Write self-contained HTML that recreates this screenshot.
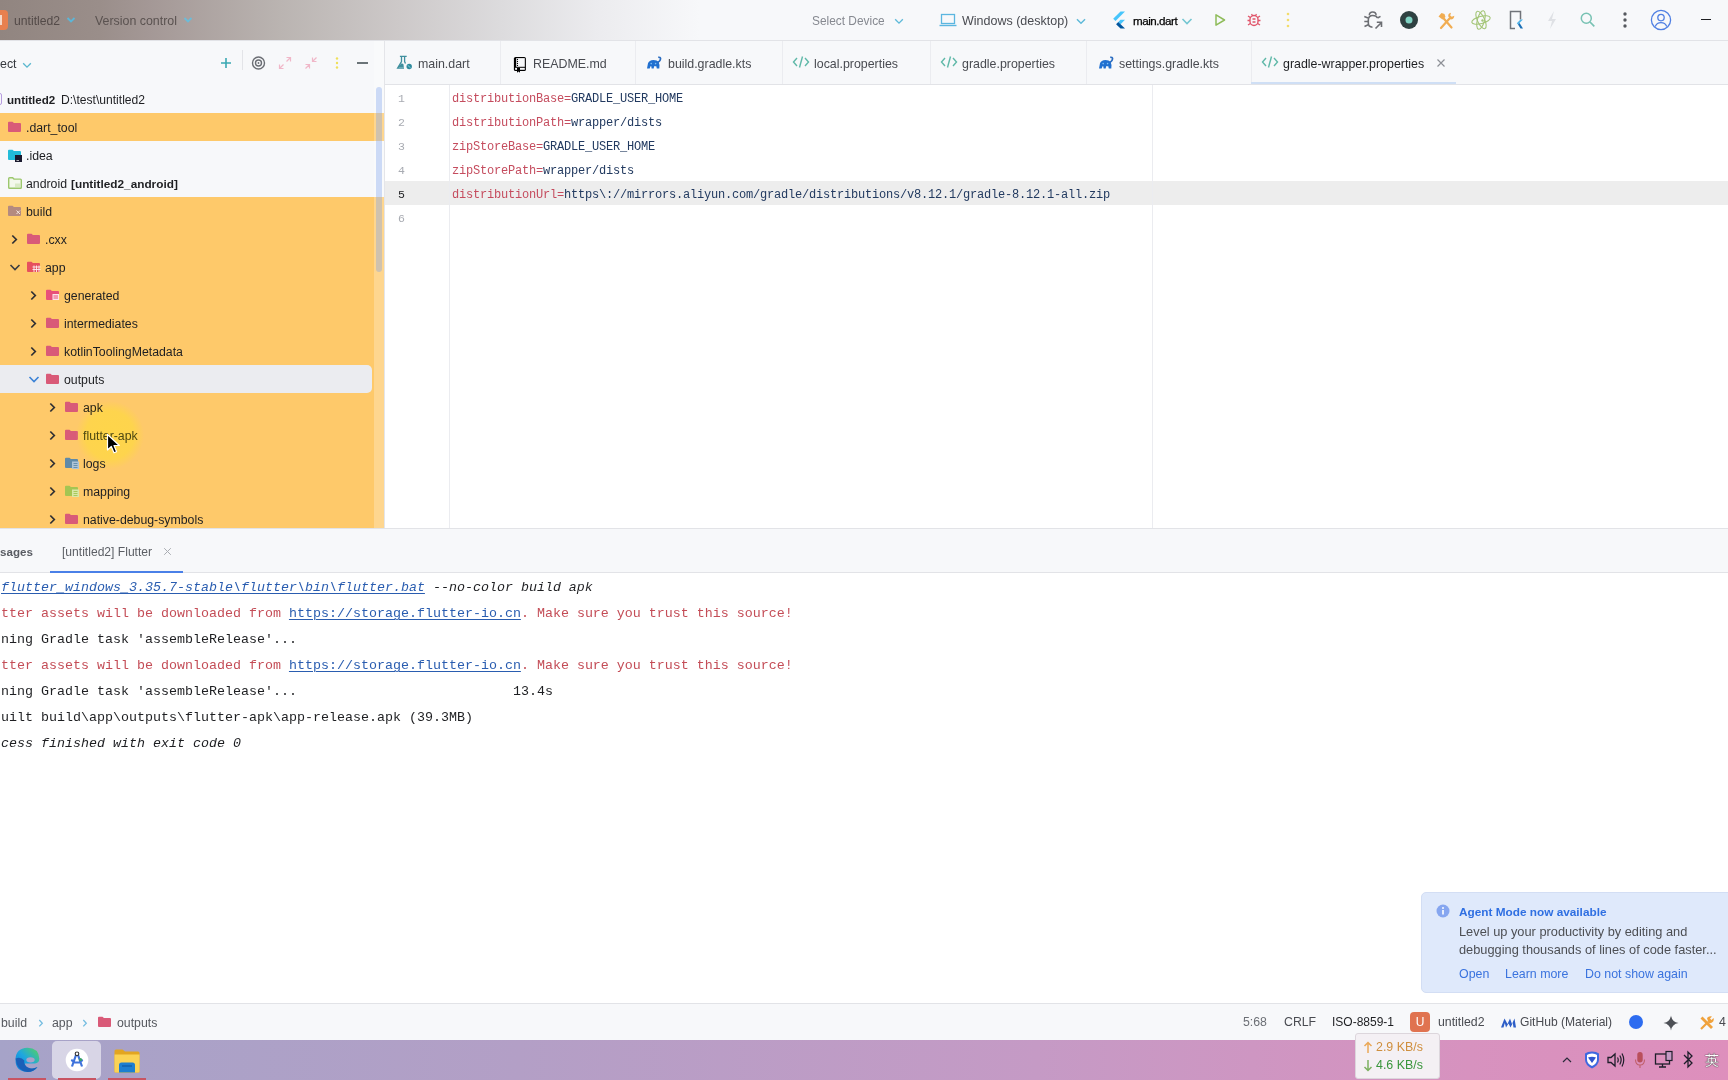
<!DOCTYPE html><html><head><meta charset="utf-8"><style>
*{margin:0;padding:0;box-sizing:border-box}
html,body{width:1728px;height:1080px;overflow:hidden;background:#f7f8fa;font-family:"Liberation Sans",sans-serif;font-size:12.4px;color:#1e1f22}
.a{position:absolute}
.t{-webkit-font-smoothing:antialiased}
#root{position:absolute;left:0;top:0;width:1728px;height:1080px;will-change:transform}
svg{display:block}
#title{left:0;top:0;width:1728px;height:41px;background:linear-gradient(90deg,#918580 0px,#9a8e8a 100px,#a49896 150px,#bab4b1 280px,#cdc9c9 400px,#dcdbdd 500px,#ececef 600px,#f7f8fa 700px,#f7f8fa 1728px);border-bottom:1px solid #e2e3e7}
.t{position:absolute;white-space:nowrap;line-height:16px;z-index:2}
#proj{left:0;top:41px;width:384px;height:487px;background:#f7f8fa;overflow:hidden}
#tabs{left:385px;top:41px;width:1343px;height:44px;background:#f7f8fa;border-bottom:1px solid #e2e3e7}
#editor{left:385px;top:85px;width:1343px;height:443px;background:#fff;overflow:hidden}
.row{position:absolute;left:0;height:28px;width:384px}
.orange{background:#fec96a}
.code{position:absolute;left:67px;font-family:"Liberation Mono",monospace;font-size:12px;letter-spacing:-0.2px;line-height:24px;white-space:pre;color:#223a60}
.k{color:#c54c5e}
.ln{position:absolute;left:0;width:20px;text-align:right;font-family:"Liberation Mono",monospace;font-size:11.5px;color:#aeb1b8;line-height:24px}
#bottom{left:0;top:528px;width:1728px;height:476px;background:#fff}
#btabs{left:0;top:528px;width:1728px;height:45px;background:#f7f8fa;border-top:1px solid #e2e3e7;border-bottom:1px solid #e2e3e7}
.con{position:absolute;left:1px;font-family:"Liberation Mono",monospace;font-size:13.33px;line-height:26px;white-space:pre;color:#1e1f22}
.red{color:#c44d57}
.lnk{color:#2a5db0;text-decoration:underline;text-underline-offset:2px;text-decoration-thickness:1px}
.it{font-style:italic}
#status{left:0;top:1003px;width:1728px;height:37px;background:#f7f8fa;border-top:1px solid #e2e3e7}
#task{left:0;top:1040px;width:1728px;height:40px;background:linear-gradient(90deg,#a6a3c8 0%,#b39fc6 30%,#c59ac5 60%,#d792bf 85%,#de8fbc 100%)}
.tabtxt{color:#494b51}
</style></head><body><div id="root">
<div id="title" class="a">
<div class="a" style="left:-12px;top:10px;width:20px;height:20px;border-radius:4px;background:#e8804f"></div>
<div class="a" style="left:0;top:15px;width:2px;height:10px;background:#f6d8c8"></div>
<div class="t" style="left:14px;top:13px;font-size:12.2px;color:#534a48">untitled2</div>
<svg class="a" style="left:66px;top:16px" width="10" height="8" viewBox="0 0 10 8"><path d="M1.5 2L5 5.5L8.5 2" fill="none" stroke="#5cb6d8" stroke-width="1.8"/></svg>
<div class="t" style="left:95px;top:13px;font-size:12.4px;color:#5a5250">Version control</div>
<svg class="a" style="left:183px;top:16px" width="10" height="8" viewBox="0 0 10 8"><path d="M1.5 2L5 5.5L8.5 2" fill="none" stroke="#6cbcd9" stroke-width="1.8"/></svg>
<div class="t" style="left:812px;top:13px;font-size:11.9px;color:#868990">Select Device</div>
<div class="a" style="left:891px;top:13px;transform:scale(0.85)"><svg width="16" height="16" viewBox="0 0 16 16"><path d="M3.5 6L8 10.5L12.5 6" fill="none" stroke="#5fbad9" stroke-width="1.6"/></svg></div>
<svg class="a" style="left:939px;top:12px" width="18" height="16" viewBox="0 0 18 16"><rect x="2.5" y="2.5" width="13" height="9" fill="none" stroke="#5bb6e0" stroke-width="1.3"/><path d="M0.5 13.5H17.5" stroke="#5bb6e0" stroke-width="1.4"/></svg>
<div class="t" style="left:962px;top:13px;font-size:12.5px;color:#494b51">Windows (desktop)</div>
<div class="a" style="left:1073px;top:13px;transform:scale(0.9)"><svg width="16" height="16" viewBox="0 0 16 16"><path d="M3.5 6L8 10.5L12.5 6" fill="none" stroke="#5fbad9" stroke-width="1.6"/></svg></div>
<svg class="a" style="left:1111px;top:11px" width="16" height="18" viewBox="0 0 16 18"><path d="M9.5 0.5H14L4.5 10L2.2 7.7Z" fill="#47c5fb"/><path d="M9.5 8.8H14L9.6 13.2L7.3 11Z" fill="#47c5fb"/><path d="M7.3 11L9.6 13.2L14 17.5H9.5L5.1 13.2Z" fill="#00569e"/></svg>
<div class="t" style="left:1133px;top:13px;font-size:11.6px;letter-spacing:-0.45px;color:#000;-webkit-text-stroke:0.25px #000">main.dart</div>
<div class="a" style="left:1179px;top:13px"><svg width="16" height="16" viewBox="0 0 16 16"><path d="M3.5 6L8 10.5L12.5 6" fill="none" stroke="#74c6d2" stroke-width="1.6"/></svg></div>
<svg class="a" style="left:1212px;top:12px" width="16" height="16" viewBox="0 0 16 16"><path d="M4 2.8L12.5 8L4 13.2Z" fill="none" stroke="#8fbc5a" stroke-width="1.5" stroke-linejoin="round"/></svg>
<svg class="a" style="left:1245px;top:11px" width="18" height="18" viewBox="0 0 18 18"><rect x="5" y="4.5" width="8" height="10" rx="4" fill="none" stroke="#e0566b" stroke-width="1.4"/><path d="M7.5 8H10.5M7.5 11H10.5M2.5 9.5H5M13 9.5H15.5M3 5L5.3 6.5M15 5L12.7 6.5M3 14L5.3 12.5M15 14L12.7 12.5M6.5 3L7.5 4.5M11.5 3L10.5 4.5" stroke="#e0566b" stroke-width="1.3"/></svg>
<svg class="a" style="left:1283px;top:11px" width="10" height="18" viewBox="0 0 10 18"><circle cx="5" cy="3" r="1.3" fill="#f3dc6b"/><circle cx="5" cy="9" r="1.3" fill="#f3dc6b"/><circle cx="5" cy="15" r="1.3" fill="#f3dc6b"/></svg>
<svg class="a" style="left:1360px;top:6px" width="28" height="28" viewBox="0 0 28 28"><path d="M9.3 9.3Q9.3 5.9 12.7 5.9Q16.1 5.9 16.1 9.3" fill="none" stroke="#6c6e73" stroke-width="1.5"/><path d="M17.5 12Q16.5 9.5 12.7 9.5Q8.5 9.5 8.3 14V17Q8.3 21 12.5 21.2" fill="none" stroke="#6c6e73" stroke-width="1.6"/><path d="M4.3 10.5L8 12M4.3 15.5H8.3M4.5 20.5L8.2 18.8M17.5 12L20.5 10.3" stroke="#6c6e73" stroke-width="1.5"/><path d="M15.5 22.5L21.2 16.8M16.8 16.3H21.5V21" fill="none" stroke="#6c6e73" stroke-width="1.6"/></svg>
<svg class="a" style="left:1399px;top:10px" width="20" height="20" viewBox="0 0 20 20"><circle cx="10" cy="10" r="9" fill="#2f4141"/><circle cx="10" cy="10" r="3.5" fill="#7fd3c3"/></svg>
<svg class="a" style="left:1433px;top:7px" width="26" height="26" viewBox="0 0 26 26"><path d="M8 21L16.5 11.5" stroke="#f1ad52" stroke-width="2.2" stroke-linecap="round"/><path d="M9 9.5L18.5 20.5" stroke="#f1ad52" stroke-width="2.2" stroke-linecap="round"/><path d="M5.5 9.5L8.5 6L11.5 7L12.5 10L9.5 12.5Z" fill="#f1ad52"/><path d="M15.3 9.5Q14.8 6.3 18 5.7L17.2 8.4L18.8 9.8L21.3 8.8Q21.2 12.3 17.6 12.6Z" fill="#f1ad52"/></svg>
<svg class="a" style="left:1470px;top:9px" width="22" height="22" viewBox="0 0 22 22"><ellipse cx="11" cy="11" rx="9.5" ry="3.6" fill="none" stroke="#a3c576" stroke-width="1.1" transform="rotate(-15 11 11)"/><ellipse cx="11" cy="11" rx="9.5" ry="3.6" fill="none" stroke="#a3c576" stroke-width="1.1" transform="rotate(65 11 11)"/><ellipse cx="11" cy="11" rx="9.5" ry="3.6" fill="none" stroke="#a3c576" stroke-width="1.1" transform="rotate(-75 11 11)"/><circle cx="12.5" cy="11.5" r="1.2" fill="#a3c576"/></svg>
<svg class="a" style="left:1506px;top:9px" width="20" height="22" viewBox="0 0 20 22"><path d="M14.5 10.5V2.5H4.5V19.5H9" fill="none" stroke="#707379" stroke-width="1.5"/><path d="M14.5 10.5H17L12 15.5L10.8 14.3Z" fill="#4fb3e8"/><path d="M12 15.5L13.6 13.9L17 19.5H14.5Z" fill="#1a6fb5"/></svg>
<svg class="a" style="left:1543px;top:10px" width="18" height="20" viewBox="0 0 18 20"><path d="M11 1L5 11H9L7 19L13 9H9Z" fill="#dfe1e5"/></svg>
<svg class="a" style="left:1578px;top:10px" width="20" height="20" viewBox="0 0 20 20"><circle cx="8.3" cy="8.3" r="5" fill="none" stroke="#78c2b3" stroke-width="1.5"/><path d="M12 12L16.3 16.3" stroke="#78c2b3" stroke-width="1.7"/></svg>
<svg class="a" style="left:1620px;top:10px" width="10" height="20" viewBox="0 0 10 20"><circle cx="5" cy="4" r="1.7" fill="#55585e"/><circle cx="5" cy="10" r="1.7" fill="#55585e"/><circle cx="5" cy="16" r="1.7" fill="#55585e"/></svg>
<svg class="a" style="left:1650px;top:9px" width="22" height="22" viewBox="0 0 22 22"><circle cx="11" cy="11" r="9.6" fill="none" stroke="#4f7fe3" stroke-width="1.3"/><circle cx="11" cy="8.6" r="3.2" fill="none" stroke="#4f7fe3" stroke-width="1.3"/><path d="M5.2 17.5Q6.8 13.6 11 13.6Q15.2 13.6 16.8 17.5" fill="none" stroke="#4f7fe3" stroke-width="1.3"/></svg>
<div class="a" style="left:1701px;top:19px;width:10px;height:1.3px;background:#1e1f22"></div>
</div>
<div id="proj" class="a">
<div class="t" style="left:0;top:15px;font-size:12.4px;color:#35383e">ect</div>
<div class="a" style="left:19px;top:16px;transform:scale(0.85)"><svg width="16" height="16" viewBox="0 0 16 16"><path d="M3.5 6L8 10.5L12.5 6" fill="none" stroke="#5bb8cf" stroke-width="1.6"/></svg></div>
<svg class="a" style="left:218px;top:14px" width="16" height="16" viewBox="0 0 16 16"><path d="M8 3V13M3 8H13" stroke="#3aa8b3" stroke-width="1.6"/></svg>
<div class="a" style="left:242px;top:9px;width:1px;height:20px;background:#e3e4e8"></div>
<svg class="a" style="left:250px;top:14px" width="16" height="16" viewBox="0 0 16 16"><circle cx="8.5" cy="8" r="6" fill="none" stroke="#6b6e74" stroke-width="1.4"/><circle cx="8.5" cy="8" r="3" fill="none" stroke="#6b6e74" stroke-width="1.4"/><circle cx="8.5" cy="8" r="0.9" fill="#6b6e74"/></svg>
<svg class="a" style="left:277px;top:14px" width="16" height="16" viewBox="0 0 16 16"><path d="M9.5 2.5H13.5V6.5M13.5 2.5L9.5 6.5M6.5 13.5H2.5V9.5M2.5 13.5L6.5 9.5" fill="none" stroke="#f0b7c8" stroke-width="1.2"/></svg>
<svg class="a" style="left:303px;top:14px" width="16" height="16" viewBox="0 0 16 16"><path d="M9.5 2.5V6.5H13.5M9.5 6.5L13.5 2.5M2.5 9.5H6.5V13.5M6.5 9.5L2.5 13.5" fill="none" stroke="#f0b7c8" stroke-width="1.2"/></svg>
<svg class="a" style="left:332px;top:14px" width="10" height="16" viewBox="0 0 10 16"><circle cx="5" cy="3.5" r="1.2" fill="#efe05a"/><circle cx="5" cy="8" r="1.2" fill="#efe05a"/><circle cx="5" cy="12.5" r="1.2" fill="#efe05a"/></svg>
<div class="a" style="left:357px;top:21px;width:11px;height:2px;background:#6b7478"></div>
<div class="row" style="top:44px;">
<div class="a" style="left:-4px;top:8px;width:6px;height:12px;border:1.5px solid #b79cdf;border-radius:2px"></div>
<div class="t" style="left:7px;top:7px;font-weight:bold;font-size:11.6px;color:#1e1f22">untitled2</div>
<div class="t" style="left:61px;top:7px;font-size:12.1px;color:#1e1f22">D:\test\untitled2</div>
</div>
<div class="row orange" style="top:72px;">
<div class="a" style="left:7px;top:6px"><svg width="16" height="16" viewBox="0 0 16 16"><path d="M1 3.7Q1 2.7 2 2.7H5.5L6.9 4.1H13Q14 4.1 14 5.1V11.9Q14 12.9 13 12.9H2Q1 12.9 1 11.9Z" fill="#d95a78"/></svg></div>
<div class="t" style="left:26px;top:7px;font-size:12.3px;color:#1e1f22">.dart_tool</div>
</div>
<div class="row" style="top:100px;">
<div class="a" style="left:7px;top:6px"><svg width="16" height="16" viewBox="0 0 16 16"><path d="M1 3.7Q1 2.7 2 2.7H5.5L6.9 4.1H13Q14 4.1 14 5.1V11.9Q14 12.9 13 12.9H2Q1 12.9 1 11.9Z" fill="#22bcd9"/><rect x="8" y="8" width="7" height="7" fill="#1a1a2e"/><path d="M9.5 13.5H12" stroke="#e0e0e0" stroke-width="0.8"/></svg></div>
<div class="t" style="left:26px;top:7px;font-size:12.3px;color:#1e1f22">.idea</div>
</div>
<div class="row" style="top:128px;">
<svg class="a" style="left:7px;top:6px" width="16" height="16" viewBox="0 0 16 16"><path d="M1.7 3.6Q1.7 2.7 2.6 2.7H5.6L7 4.1H13.4Q14.3 4.1 14.3 5V12.4Q14.3 13.3 13.4 13.3H2.6Q1.7 13.3 1.7 12.4Z" fill="#f3f8ec" stroke="#9cc76e" stroke-width="1.4"/><rect x="8" y="8.5" width="5" height="3.5" fill="#d9eac6"/></svg>
<div class="t" style="left:26px;top:7px;font-size:12.3px;color:#1e1f22">android</div>
<div class="t" style="left:71px;top:7px;font-size:11.8px;font-weight:bold;color:#1e1f22">[untitled2_android]</div>
</div>
<div class="row orange" style="top:156px;">
<div class="a" style="left:7px;top:6px"><svg width="16" height="16" viewBox="0 0 16 16"><path d="M1 3.7Q1 2.7 2 2.7H5.5L6.9 4.1H13Q14 4.1 14 5.1V11.9Q14 12.9 13 12.9H2Q1 12.9 1 11.9Z" fill="#b48a80"/><path d="M9.5 7.5L13 11M13 7.5L9.5 11" stroke="#f5e6df" stroke-width="1"/></svg></div>
<div class="t" style="left:26px;top:7px;font-size:12.3px;color:#1e1f22">build</div>
</div>
<div class="row orange" style="top:184px;">
<div class="a" style="left:7px;top:6px"><svg width="16" height="16" viewBox="0 0 16 16"><path d="M5.3 4.5L9.3 8.5L5.3 12.5" fill="none" stroke="#2e2f33" stroke-width="1.7"/></svg></div>
<div class="a" style="left:26px;top:6px"><svg width="16" height="16" viewBox="0 0 16 16"><path d="M1 3.7Q1 2.7 2 2.7H5.5L6.9 4.1H13Q14 4.1 14 5.1V11.9Q14 12.9 13 12.9H2Q1 12.9 1 11.9Z" fill="#d95a78"/></svg></div>
<div class="t" style="left:45px;top:7px;font-size:12.3px;color:#1e1f22">.cxx</div>
</div>
<div class="row orange" style="top:212px;">
<div class="a" style="left:7px;top:6px"><svg width="16" height="16" viewBox="0 0 16 16"><path d="M3.5 6L8 10.5L12.5 6" fill="none" stroke="#3b3d42" stroke-width="1.6"/></svg></div>
<div class="a" style="left:26px;top:6px"><svg width="16" height="16" viewBox="0 0 16 16"><path d="M1 3.7Q1 2.7 2 2.7H5.5L6.9 4.1H13Q14 4.1 14 5.1V11.9Q14 12.9 13 12.9H2Q1 12.9 1 11.9Z" fill="#e6505e"/><path d="M8 6.5V13M10.5 6.5V13M13 6.5V13M6.5 8H14.5M6.5 10.5H14.5" stroke="#fff" stroke-width="0.9" opacity="0.9"/></svg></div>
<div class="t" style="left:45px;top:7px;font-size:12.3px;color:#1e1f22">app</div>
</div>
<div class="row orange" style="top:240px;">
<div class="a" style="left:26px;top:6px"><svg width="16" height="16" viewBox="0 0 16 16"><path d="M5.3 4.5L9.3 8.5L5.3 12.5" fill="none" stroke="#2e2f33" stroke-width="1.7"/></svg></div>
<div class="a" style="left:45px;top:6px"><svg width="16" height="16" viewBox="0 0 16 16"><path d="M1 3.7Q1 2.7 2 2.7H5.5L6.9 4.1H13Q14 4.1 14 5.1V11.9Q14 12.9 13 12.9H2Q1 12.9 1 11.9Z" fill="#e8507a"/><rect x="7.5" y="7" width="6.5" height="6" fill="#fff" opacity="0.85"/><path d="M8.5 9H13M8.5 11H13" stroke="#e8507a" stroke-width="1"/></svg></div>
<div class="t" style="left:64px;top:7px;font-size:12.3px;color:#1e1f22">generated</div>
</div>
<div class="row orange" style="top:268px;">
<div class="a" style="left:26px;top:6px"><svg width="16" height="16" viewBox="0 0 16 16"><path d="M5.3 4.5L9.3 8.5L5.3 12.5" fill="none" stroke="#2e2f33" stroke-width="1.7"/></svg></div>
<div class="a" style="left:45px;top:6px"><svg width="16" height="16" viewBox="0 0 16 16"><path d="M1 3.7Q1 2.7 2 2.7H5.5L6.9 4.1H13Q14 4.1 14 5.1V11.9Q14 12.9 13 12.9H2Q1 12.9 1 11.9Z" fill="#d95a78"/></svg></div>
<div class="t" style="left:64px;top:7px;font-size:12.3px;color:#1e1f22">intermediates</div>
</div>
<div class="row orange" style="top:296px;">
<div class="a" style="left:26px;top:6px"><svg width="16" height="16" viewBox="0 0 16 16"><path d="M5.3 4.5L9.3 8.5L5.3 12.5" fill="none" stroke="#2e2f33" stroke-width="1.7"/></svg></div>
<div class="a" style="left:45px;top:6px"><svg width="16" height="16" viewBox="0 0 16 16"><path d="M1 3.7Q1 2.7 2 2.7H5.5L6.9 4.1H13Q14 4.1 14 5.1V11.9Q14 12.9 13 12.9H2Q1 12.9 1 11.9Z" fill="#d95a78"/></svg></div>
<div class="t" style="left:64px;top:7px;font-size:12.3px;color:#1e1f22">kotlinToolingMetadata</div>
</div>
<div class="row orange" style="top:324px;">
<div class="a" style="left:-8px;top:0;width:380px;height:28px;border-radius:5px;background:#ebecf0"></div>
<div class="a" style="left:26px;top:6px"><svg width="16" height="16" viewBox="0 0 16 16"><path d="M3.5 6L8 10.5L12.5 6" fill="none" stroke="#3b82d6" stroke-width="1.6"/></svg></div>
<div class="a" style="left:45px;top:6px"><svg width="16" height="16" viewBox="0 0 16 16"><path d="M1 3.7Q1 2.7 2 2.7H5.5L6.9 4.1H13Q14 4.1 14 5.1V11.9Q14 12.9 13 12.9H2Q1 12.9 1 11.9Z" fill="#d95a78"/></svg></div>
<div class="t" style="left:64px;top:7px;font-size:12.3px;color:#1e1f22">outputs</div>
</div>
<div class="row orange" style="top:352px;">
<div class="a" style="left:45px;top:6px"><svg width="16" height="16" viewBox="0 0 16 16"><path d="M5.3 4.5L9.3 8.5L5.3 12.5" fill="none" stroke="#2e2f33" stroke-width="1.7"/></svg></div>
<div class="a" style="left:64px;top:6px"><svg width="16" height="16" viewBox="0 0 16 16"><path d="M1 3.7Q1 2.7 2 2.7H5.5L6.9 4.1H13Q14 4.1 14 5.1V11.9Q14 12.9 13 12.9H2Q1 12.9 1 11.9Z" fill="#d95a78"/></svg></div>
<div class="t" style="left:83px;top:7px;font-size:12.3px;color:#2a2616">apk</div>
</div>
<div class="row orange" style="top:380px;">
<div class="a" style="left:45px;top:6px"><svg width="16" height="16" viewBox="0 0 16 16"><path d="M5.3 4.5L9.3 8.5L5.3 12.5" fill="none" stroke="#2e2f33" stroke-width="1.7"/></svg></div>
<div class="a" style="left:64px;top:6px"><svg width="16" height="16" viewBox="0 0 16 16"><path d="M1 3.7Q1 2.7 2 2.7H5.5L6.9 4.1H13Q14 4.1 14 5.1V11.9Q14 12.9 13 12.9H2Q1 12.9 1 11.9Z" fill="#d95a78"/></svg></div>
<div class="t" style="left:83px;top:7px;font-size:12.3px;color:#4d4812">flutter-apk</div>
</div>
<div class="row orange" style="top:408px;">
<div class="a" style="left:45px;top:6px"><svg width="16" height="16" viewBox="0 0 16 16"><path d="M5.3 4.5L9.3 8.5L5.3 12.5" fill="none" stroke="#2e2f33" stroke-width="1.7"/></svg></div>
<div class="a" style="left:64px;top:6px"><svg width="16" height="16" viewBox="0 0 16 16"><path d="M1 3.7Q1 2.7 2 2.7H5.5L6.9 4.1H13Q14 4.1 14 5.1V11.9Q14 12.9 13 12.9H2Q1 12.9 1 11.9Z" fill="#5f8aa8"/><rect x="8" y="6.5" width="7" height="7.5" fill="#aec4d6"/><path d="M9.5 8.5H13.5M9.5 10.5H13.5M9.5 12.5H13.5" stroke="#5f8aa8" stroke-width="0.9"/></svg></div>
<div class="t" style="left:83px;top:7px;font-size:12.3px;color:#1e1f22">logs</div>
</div>
<div class="row orange" style="top:436px;">
<div class="a" style="left:45px;top:6px"><svg width="16" height="16" viewBox="0 0 16 16"><path d="M5.3 4.5L9.3 8.5L5.3 12.5" fill="none" stroke="#2e2f33" stroke-width="1.7"/></svg></div>
<div class="a" style="left:64px;top:6px"><svg width="16" height="16" viewBox="0 0 16 16"><path d="M1 3.7Q1 2.7 2 2.7H5.5L6.9 4.1H13Q14 4.1 14 5.1V11.9Q14 12.9 13 12.9H2Q1 12.9 1 11.9Z" fill="#a4c552"/><rect x="8" y="6.5" width="7" height="7.5" fill="#d9e8a8"/><path d="M9.5 8.5H13.5M9.5 10.5H13.5M9.5 12.5H13.5" stroke="#a4c552" stroke-width="0.9"/></svg></div>
<div class="t" style="left:83px;top:7px;font-size:12.3px;color:#1e1f22">mapping</div>
</div>
<div class="row orange" style="top:464px;">
<div class="a" style="left:45px;top:6px"><svg width="16" height="16" viewBox="0 0 16 16"><path d="M5.3 4.5L9.3 8.5L5.3 12.5" fill="none" stroke="#2e2f33" stroke-width="1.7"/></svg></div>
<div class="a" style="left:64px;top:6px"><svg width="16" height="16" viewBox="0 0 16 16"><path d="M1 3.7Q1 2.7 2 2.7H5.5L6.9 4.1H13Q14 4.1 14 5.1V11.9Q14 12.9 13 12.9H2Q1 12.9 1 11.9Z" fill="#d95a78"/></svg></div>
<div class="t" style="left:83px;top:7px;font-size:12.3px;color:#1e1f22">native-debug-symbols</div>
</div>
<div class="a" style="left:374px;top:0;width:10px;height:487px;background:rgba(255,255,255,0.25)"></div>
<div class="a" style="left:376px;top:46px;width:6px;height:185px;border-radius:3px;background:rgba(120,158,235,0.35)"></div>
<div class="a" style="z-index:1;left:76px;top:360px;width:68px;height:68px;border-radius:50%;background:radial-gradient(circle,rgba(254,214,72,0.95) 0%,rgba(254,214,72,0.85) 50%,rgba(254,214,72,0) 71%)"></div>
<svg class="a" style="z-index:3;left:106px;top:392px" width="16" height="22" viewBox="0 0 16 22"><path d="M1.5 1.5V17L5.3 13.5L8 19.8L10.6 18.7L8 12.5H13.3Z" fill="#000" stroke="#fff" stroke-width="1.2" stroke-linejoin="round"/></svg>
</div>
<div id="tabs" class="a">
<div class="a" style="left:115px;top:0;width:1px;height:43px;background:#ebecf0"></div>
<div class="a" style="left:250px;top:0;width:1px;height:43px;background:#ebecf0"></div>
<div class="a" style="left:397px;top:0;width:1px;height:43px;background:#ebecf0"></div>
<div class="a" style="left:545px;top:0;width:1px;height:43px;background:#ebecf0"></div>
<div class="a" style="left:701px;top:0;width:1px;height:43px;background:#ebecf0"></div>
<div class="a" style="left:866px;top:0;width:1px;height:43px;background:#ebecf0"></div>
<div class="a" style="left:9px;top:13px"><svg width="18" height="18" viewBox="0 0 18 18"><path d="M5.9 2.3H12.7M7.5 2.3V7.6L3.6 14.2H10M10.6 2.3V7.6L11.5 9.5" fill="none" stroke="#3f8f9e" stroke-width="1.3"/><path d="M5.2 11.5L7.8 9.3L9.5 10.2L9.8 13.6H4.3Z" fill="#3f8f9e"/><circle cx="15.2" cy="12.5" r="2.7" fill="#2f8a9c"/><path d="M13.6 11.2L16.6 13.9" stroke="#8fe0f0" stroke-width="0.8"/></svg></div>
<div class="t" style="left:33px;top:15px;font-size:12.4px;color:#494b51">main.dart</div>
<div class="a" style="left:126px;top:13px"><svg width="18" height="22" viewBox="0 0 18 22"><rect x="2.9" y="2.9" width="12" height="14.1" rx="1.6" fill="#000"/><rect x="5.2" y="4.1" width="8.6" height="8.7" fill="#f7f8fa"/><rect x="4.1" y="13.8" width="9.7" height="2" fill="#f7f8fa"/><circle cx="6.5" cy="5.4" r="0.6" fill="#000"/><circle cx="6.5" cy="7.4" r="0.6" fill="#000"/><circle cx="6.5" cy="9.4" r="0.6" fill="#000"/><circle cx="6.5" cy="11.4" r="0.6" fill="#000"/><path d="M6 13.8H9V18.8L7.5 17.6L6 18.8Z" fill="#000"/></svg></div>
<div class="t" style="left:148px;top:15px;font-size:12.4px;color:#494b51">README.md</div>
<div class="a" style="left:260px;top:13px"><svg width="18" height="18" viewBox="0 0 18 18"><path d="M2 14.6L3 9.2Q4 6 8.5 5.9Q12 5.9 13.5 7.8L14.5 11L14.3 14.6H11.8L11.3 12.3H9.1L8.7 14.6H6.6L6.3 12.3H5.5L4.7 14.6Z" fill="#2170d0"/><path d="M12.8 8.6Q15.6 6.8 15.6 4.8Q15.4 3 13.2 3.3" fill="none" stroke="#2a6cc0" stroke-width="1.7"/><circle cx="6.2" cy="9.6" r="0.8" fill="#7fc0f5"/><circle cx="10.6" cy="9.6" r="0.8" fill="#7fc0f5"/></svg></div>
<div class="t" style="left:283px;top:15px;font-size:12.4px;color:#494b51">build.gradle.kts</div>
<div class="a" style="left:407px;top:13px"><svg width="18" height="16" viewBox="0 0 18 16"><path d="M5 4L1.5 8L5 12M13 4L16.5 8L13 12" fill="none" stroke="#5fb8a8" stroke-width="1.4"/><path d="M10.5 2.5L7.5 13.5" stroke="#5fb8a8" stroke-width="1.4"/></svg></div>
<div class="t" style="left:429px;top:15px;font-size:12.4px;color:#494b51">local.properties</div>
<div class="a" style="left:555px;top:13px"><svg width="18" height="16" viewBox="0 0 18 16"><path d="M5 4L1.5 8L5 12M13 4L16.5 8L13 12" fill="none" stroke="#5fb8a8" stroke-width="1.4"/><path d="M10.5 2.5L7.5 13.5" stroke="#5fb8a8" stroke-width="1.4"/></svg></div>
<div class="t" style="left:577px;top:15px;font-size:12.4px;color:#494b51">gradle.properties</div>
<div class="a" style="left:712px;top:13px"><svg width="18" height="18" viewBox="0 0 18 18"><path d="M2 14.6L3 9.2Q4 6 8.5 5.9Q12 5.9 13.5 7.8L14.5 11L14.3 14.6H11.8L11.3 12.3H9.1L8.7 14.6H6.6L6.3 12.3H5.5L4.7 14.6Z" fill="#2170d0"/><path d="M12.8 8.6Q15.6 6.8 15.6 4.8Q15.4 3 13.2 3.3" fill="none" stroke="#2a6cc0" stroke-width="1.7"/><circle cx="6.2" cy="9.6" r="0.8" fill="#7fc0f5"/><circle cx="10.6" cy="9.6" r="0.8" fill="#7fc0f5"/></svg></div>
<div class="t" style="left:734px;top:15px;font-size:12.4px;color:#494b51">settings.gradle.kts</div>
<div class="a" style="left:876px;top:13px"><svg width="18" height="16" viewBox="0 0 18 16"><path d="M5 4L1.5 8L5 12M13 4L16.5 8L13 12" fill="none" stroke="#5fb8a8" stroke-width="1.4"/><path d="M10.5 2.5L7.5 13.5" stroke="#5fb8a8" stroke-width="1.4"/></svg></div>
<div class="t" style="left:898px;top:15px;font-size:12.4px;color:#1e1f22">gradle-wrapper.properties</div>
<svg class="a" style="left:1051px;top:17px" width="10" height="10" viewBox="0 0 10 10"><path d="M1.5 1.5L8.5 8.5M8.5 1.5L1.5 8.5" stroke="#8c8f95" stroke-width="1.2"/></svg>
<div class="a" style="left:866px;top:41px;width:205px;height:2px;background:#cfdff5"></div>
</div>
<div id="editor" class="a">
<div class="a" style="left:0;top:96px;width:1343px;height:24px;background:#ededed"></div>
<div class="a" style="left:64px;top:0;width:1px;height:443px;background:#ebecf0"></div>
<div class="a" style="left:767px;top:0;width:1px;height:443px;background:#ebecf0"></div>
<div class="ln" style="top:2px;color:#a8abb2">1</div>
<div class="ln" style="top:26px;color:#a8abb2">2</div>
<div class="ln" style="top:50px;color:#a8abb2">3</div>
<div class="ln" style="top:74px;color:#a8abb2">4</div>
<div class="ln" style="top:98px;color:#1e1f22">5</div>
<div class="ln" style="top:122px;color:#a8abb2">6</div>
<div class="code" style="top:2px"><span class="k">distributionBase=</span>GRADLE_USER_HOME</div>
<div class="code" style="top:26px"><span class="k">distributionPath=</span>wrapper/dists</div>
<div class="code" style="top:50px"><span class="k">zipStoreBase=</span>GRADLE_USER_HOME</div>
<div class="code" style="top:74px"><span class="k">zipStorePath=</span>wrapper/dists</div>
<div class="code" style="top:98px"><span class="k">distributionUrl=</span>https\://mirrors.aliyun.com/gradle/distributions/v8.12.1/gradle-8.12.1-all.zip</div>
</div>
<div id="bottom" class="a"></div>
<div class="a" style="left:384px;top:41px;width:1px;height:487px;background:#e4e5e9"></div>
<div id="btabs" class="a">
<div class="t" style="left:0;top:15px;font-size:11.6px;font-weight:bold;color:#595c63">sages</div>
<div class="t" style="left:62px;top:15px;font-size:12.1px;color:#5b5e64">[untitled2] Flutter</div>
<svg class="a" style="left:163px;top:18px" width="9" height="9" viewBox="0 0 9 9"><path d="M1.2 1.2L7.8 7.8M7.8 1.2L1.2 7.8" stroke="#a9acb2" stroke-width="1"/></svg>
<div class="a" style="left:50px;top:42px;width:133px;height:2px;background:#4a80e8"></div>
</div>
<div class="con a" style="top:575px"><span class="lnk it">flutter_windows_3.35.7-stable\flutter\bin\flutter.bat</span><span class="it"> --no-color build apk</span></div>
<div class="con a" style="top:601px"><span class="red">tter assets will be downloaded from </span><span class="lnk">https://storage.flutter-io.cn</span><span class="red">. Make sure you trust this source!</span></div>
<div class="con a" style="top:627px">ning Gradle task 'assembleRelease'...</div>
<div class="con a" style="top:653px"><span class="red">tter assets will be downloaded from </span><span class="lnk">https://storage.flutter-io.cn</span><span class="red">. Make sure you trust this source!</span></div>
<div class="con a" style="top:679px">ning Gradle task 'assembleRelease'...                           13.4s</div>
<div class="con a" style="top:705px">uilt build\app\outputs\flutter-apk\app-release.apk (39.3MB)</div>
<div class="con a" style="top:731px"><span class="it">cess finished with exit code 0</span></div>
<div class="a" style="left:1421px;top:892px;width:320px;height:101px;background:#dfe9fb;border:1px solid #d3def4;border-radius:5px"></div>
<svg class="a" style="left:1436px;top:904px" width="14" height="14" viewBox="0 0 14 14"><circle cx="7" cy="7" r="6.5" fill="#86a6f0"/><rect x="6.2" y="6" width="1.6" height="4.5" fill="#fff"/><circle cx="7" cy="4" r="0.95" fill="#fff"/></svg>
<div class="t" style="left:1459px;top:904px;font-size:11.8px;font-weight:bold;color:#2f6fe2">Agent Mode now available</div>
<div class="t" style="left:1459px;top:924px;font-size:12.8px;color:#4d4f54">Level up your productivity by editing and</div>
<div class="t" style="left:1459px;top:942px;font-size:12.8px;color:#4d4f54">debugging thousands of lines of code faster...</div>
<div class="t" style="left:1459px;top:966px;font-size:12.4px;color:#3a73de">Open</div>
<div class="t" style="left:1505px;top:966px;font-size:12.4px;color:#3a73de">Learn more</div>
<div class="t" style="left:1585px;top:966px;font-size:12.4px;color:#3a73de">Do not show again</div>
<div id="status" class="a">
<div class="t" style="left:1px;top:11px;font-size:12.3px;color:#55585e">build</div>
<svg class="a" style="left:36px;top:12px" width="10" height="14" viewBox="0 0 10 14"><path d="M3.3 4L6.3 7.2L3.3 10.4" fill="none" stroke="#74bde0" stroke-width="1.3"/></svg>
<div class="t" style="left:52px;top:11px;font-size:12.3px;color:#55585e">app</div>
<svg class="a" style="left:80px;top:12px" width="10" height="14" viewBox="0 0 10 14"><path d="M3.3 4L6.3 7.2L3.3 10.4" fill="none" stroke="#74bde0" stroke-width="1.3"/></svg>
<div class="a" style="left:97px;top:10px"><svg width="16" height="16" viewBox="0 0 16 16"><path d="M1 3.7Q1 2.7 2 2.7H5.5L6.9 4.1H13Q14 4.1 14 5.1V11.9Q14 12.9 13 12.9H2Q1 12.9 1 11.9Z" fill="#d95a78"/></svg></div>
<div class="t" style="left:117px;top:11px;font-size:12.3px;color:#55585e">outputs</div>
<div class="t" style="left:1243px;top:10px;font-size:12.3px;color:#6c6f75">5:68</div>
<div class="t" style="left:1284px;top:10px;font-size:12.3px;color:#494b51">CRLF</div>
<div class="t" style="left:1332px;top:10px;font-size:12px;color:#1e1f22">ISO-8859-1</div>
<div class="a" style="left:1410px;top:8px;width:20px;height:20px;border-radius:4px;background:#e07350;color:#fff;font-size:12px;line-height:20px;text-align:center">U</div>
<div class="t" style="left:1438px;top:10px;font-size:12.3px;color:#494b51">untitled2</div>
<svg class="a" style="left:1500px;top:12px" width="17" height="14" viewBox="0 0 17 14"><path d="M1 11.5L4.5 2.5L7.5 8L10 2.5L12 8L14.5 2.5L16 11.5H13.5L12.8 7L10.5 11.5L8.5 7.5L6 11.5L4.8 7L3.5 11.5Z" fill="#2d5ec7"/></svg>
<div class="t" style="left:1520px;top:10px;font-size:12.1px;color:#494b51">GitHub (Material)</div>
<div class="a" style="left:1629px;top:11px;width:14px;height:14px;border-radius:50%;background:#2d6cf0"></div>
<svg class="a" style="left:1662px;top:10px" width="18" height="18" viewBox="0 0 18 18"><path d="M9 1.5Q10 8 16.5 9Q10 10 9 16.5Q8 10 1.5 9Q8 8 9 1.5Z" fill="#4d5056"/></svg>
<svg class="a" style="left:1698px;top:10px" width="18" height="18" viewBox="0 0 18 18"><path d="M3 15L10 8" stroke="#f0a23c" stroke-width="2.2"/><path d="M9 4Q11 1.5 14 2.5L12 4.5L13.5 6L15.5 4Q16.5 7 14 8.5Q12.5 9.5 10.5 9" fill="#f0a23c"/><path d="M2.5 4.5L4.5 2.5L7 5L15 13L13 15L5 7Z" fill="#f0a23c"/></svg>
<div class="t" style="left:1719px;top:10px;font-size:12.3px;color:#494b51">4</div>
</div>
<div id="task" class="a">
<svg class="a" style="left:13px;top:6px" width="28" height="28" viewBox="0 0 28 28"><defs><linearGradient id="eg" x1="0" y1="1" x2="1" y2="0"><stop offset="0" stop-color="#1177d6"/><stop offset="0.5" stop-color="#1ea7e0"/><stop offset="1" stop-color="#5ad35a"/></linearGradient></defs><path d="M2.5 14Q2.5 2.2 14.5 1.8Q25.5 2 26.3 12.5Q26.3 17 22 17.5H12Q11.8 21.5 16.5 22.5Q20.5 23.2 24.5 21Q21 26 14.5 26Q2.5 25.5 2.5 14Z" fill="url(#eg)"/><ellipse cx="17.5" cy="13.8" rx="4.2" ry="2.6" fill="#aaa2c8"/><path d="M2.6 12.5Q3.5 24.5 14.5 26Q21 26 24.5 21Q19.5 23.5 15 21.5Q10.5 19 11.3 14.5Q8 10.5 2.6 12.5Z" fill="#1a5fb8"/></svg>
<div class="a" style="left:8px;top:38px;width:38px;height:2px;background:#c85462"></div>
<div class="a" style="left:52px;top:1px;width:49px;height:38px;border-radius:5px;background:rgba(255,255,255,0.55)"></div>
<svg class="a" style="left:65px;top:8px" width="24" height="24" viewBox="0 0 24 24"><circle cx="12" cy="12" r="11.3" fill="#fff"/><path d="M7 18.5L11 7M17 18.5L13 7M8 14.5H16" fill="none" stroke="#3f73dc" stroke-width="2.2"/><path d="M6.2 12L9 13.5M17.8 12L15 13.5" stroke="#3f73dc" stroke-width="2"/><circle cx="12" cy="5.8" r="1.8" fill="none" stroke="#333" stroke-width="1.1"/><circle cx="15.6" cy="11.5" r="1.5" fill="#3aa564"/></svg>
<div class="a" style="left:58px;top:38px;width:38px;height:2px;background:#c85462"></div>
<svg class="a" style="left:113px;top:8px" width="28" height="26" viewBox="0 0 28 26"><path d="M1.5 3Q1.5 1.5 3 1.5H9.5L12 3.5H25Q26.5 3.5 26.5 5V23.5Q26.5 24.5 25.5 24.5H2.5Q1.5 24.5 1.5 23.5Z" fill="#e2a521"/><path d="M1.5 6.5H26.5V23.5Q26.5 24.5 25.5 24.5H2.5Q1.5 24.5 1.5 23.5Z" fill="#fbd354"/><path d="M6 24.5V17Q6 14.5 8.5 14.5H19.5Q22 14.5 22 17V24.5Z" fill="#1d7fd0"/><path d="M9 18H19" stroke="#0f5aa5" stroke-width="1.2"/></svg>
<div class="a" style="left:108px;top:38px;width:38px;height:2px;background:#c85462"></div>
<svg class="a" style="left:1560px;top:13px" width="14" height="14" viewBox="0 0 14 14"><path d="M3 9L7 5L11 9" fill="none" stroke="#2a2a3a" stroke-width="1.2"/></svg>
<svg class="a" style="left:1583px;top:10px" width="18" height="20" viewBox="0 0 18 20"><path d="M9 1.5Q13.5 1.5 16 3.5V9.5Q16 15 9 18.5Q2 15 2 9.5V3.5Q4.5 1.5 9 1.5Z" fill="#3f68e0"/><path d="M9 3.5Q12.5 3.5 14 5V9.5Q14 13.5 9 16Q4 13.5 4 9.5V5Q5.5 3.5 9 3.5Z" fill="#fff"/><path d="M5 7.5Q9 6 13 7.5L9 13Z" fill="#2f56d0"/></svg>
<svg class="a" style="left:1606px;top:11px" width="20" height="18" viewBox="0 0 20 18"><path d="M2 6.5H5L9 3V15L5 11.5H2Z" fill="none" stroke="#1e1e2a" stroke-width="1.3"/><path d="M11.5 6.5Q13 9 11.5 11.5M13.8 4.5Q16.5 9 13.8 13.5M16 2.5Q19.5 9 16 15.5" fill="none" stroke="#1e1e2a" stroke-width="1.2"/></svg>
<svg class="a" style="left:1633px;top:10px" width="14" height="20" viewBox="0 0 14 20"><rect x="4.3" y="2" width="5.4" height="10.5" rx="2.7" fill="#b94f5c"/><path d="M2.5 9.5Q2.5 15 7 15Q11.5 15 11.5 9.5M7 15V18" fill="none" stroke="#c0606a" stroke-width="1.1"/></svg>
<svg class="a" style="left:1654px;top:10px" width="20" height="20" viewBox="0 0 20 20"><rect x="1.5" y="4" width="14" height="10" fill="none" stroke="#1e1e2a" stroke-width="1.3"/><path d="M5 17H12M8.5 14V17" stroke="#1e1e2a" stroke-width="1.3"/><rect x="12" y="1.5" width="6" height="9" fill="#c59ac5" stroke="#1e1e2a" stroke-width="1.2"/></svg>
<svg class="a" style="left:1681px;top:9px" width="14" height="22" viewBox="0 0 14 22"><path d="M3 6L11 14L7 18V3L11 7L3 15" fill="none" stroke="#1e1e2a" stroke-width="1.3"/></svg>
<div class="t" style="left:1705px;top:12px;font-size:14px;color:#fff;text-shadow:0 0 1px #222,0 0 1px #222">英</div>
</div>
<div class="a" style="left:1355px;top:1033px;width:85px;height:46px;background:#f4f0f4;border:1px solid #dcd6dc;border-radius:3px"></div>
<svg class="a" style="left:1363px;top:1040px" width="10" height="14" viewBox="0 0 10 14"><path d="M5 2.5V13M1.5 6L5 2.5L8.5 6" fill="none" stroke="#eaa858" stroke-width="1.5"/></svg>
<div class="t" style="left:1376px;top:1039px;font-size:12.4px;color:#cf8f3e">2.9 KB/s</div>
<svg class="a" style="left:1363px;top:1059px" width="10" height="14" viewBox="0 0 10 14"><path d="M5 1V11.5M1.5 8L5 11.5L8.5 8" fill="none" stroke="#7cb060" stroke-width="1.5"/></svg>
<div class="t" style="left:1376px;top:1057px;font-size:12.4px;color:#3a963c">4.6 KB/s</div>
</div></body></html>
